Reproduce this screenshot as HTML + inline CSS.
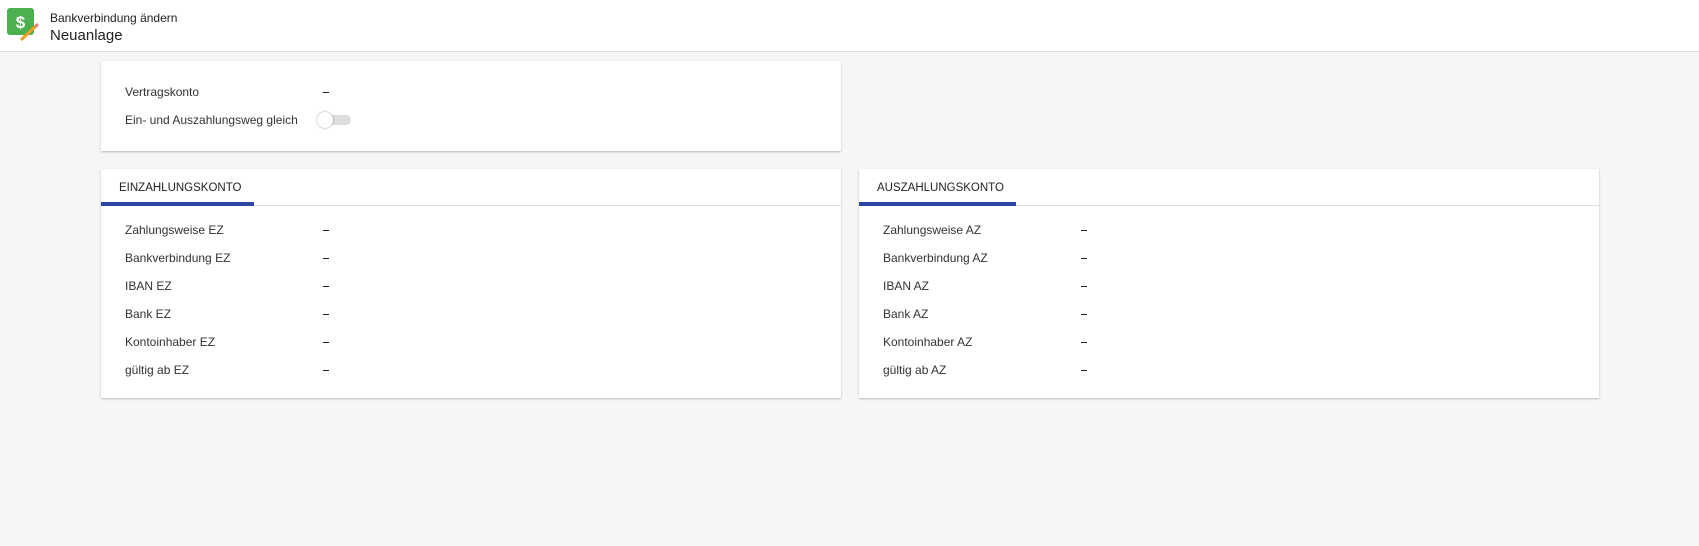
<!DOCTYPE html>
<html><head><meta charset="utf-8"><style>
*{margin:0;padding:0;box-sizing:border-box}
body{width:1699px;height:546px;background:#f6f6f6;font-family:"Liberation Sans",sans-serif;color:#333;position:relative;overflow:hidden}
.hdr{position:absolute;left:0;top:0;width:1699px;height:52px;background:#fff;border-bottom:1px solid #dcdcdc}
.t1{position:absolute;left:50px;top:11px;font-size:12px;color:#222}
.t2{position:absolute;left:50px;top:27px;font-size:15px;color:#222}
.card{position:absolute;background:#fff;box-shadow:0 1px 2px rgba(0,0,0,.25)}
.lbl{position:absolute;font-size:12px;color:#333}
.dash{position:absolute;width:6px;height:1px;background:#222}
.tab{position:absolute;top:13px;font-size:11.5px;color:#222}
.ul{position:absolute;top:33px;height:4px;background:#2d48a0}
.line{position:absolute;left:0;right:0;top:36px;height:1px;background:#e0e0e0}
</style></head><body>
<div class="hdr">
<svg style="position:absolute;left:6px;top:7px" width="34" height="34" viewBox="0 0 34 34">
<rect x="1" y="1" width="27" height="27" rx="3" fill="#4caf50"/>
<text x="14.5" y="21" text-anchor="middle" font-family="Liberation Sans" font-weight="bold" font-size="17" fill="#fff">$</text>
<line x1="15" y1="33" x2="31" y2="18" stroke="#f0a020" stroke-width="3"/>
<line x1="29" y1="20" x2="32" y2="17" stroke="#f08080" stroke-width="3"/>
</svg>
<div class="t1">Bankverbindung ändern</div>
<div class="t2">Neuanlage</div>
</div>

<div class="card" style="left:101px;top:61px;width:740px;height:90px">
<div class="lbl" style="left:24px;top:24px">Vertragskonto</div>
<div class="dash" style="left:222px;top:31px"></div>
<div class="lbl" style="left:24px;top:52px">Ein- und Auszahlungsweg gleich</div>
<div style="position:absolute;left:218px;top:54px;width:32px;height:10px;border-radius:5px;background:#ddd"></div>
<div style="position:absolute;left:216px;top:51px;width:16px;height:16px;border-radius:50%;background:#fff;box-shadow:0 0 2px rgba(0,0,0,.4)"></div>
</div>

<div class="card" style="left:101px;top:169px;width:740px;height:229px">
<div class="tab" style="left:18px">EINZAHLUNGSKONTO</div>
<div class="line"></div><div class="ul" style="left:0;width:153px"></div>
<div class="lbl" style="left:24px;top:54px">Zahlungsweise EZ</div><div class="dash" style="left:222px;top:61px"></div>
<div class="lbl" style="left:24px;top:82px">Bankverbindung EZ</div><div class="dash" style="left:222px;top:89px"></div>
<div class="lbl" style="left:24px;top:110px">IBAN EZ</div><div class="dash" style="left:222px;top:117px"></div>
<div class="lbl" style="left:24px;top:138px">Bank EZ</div><div class="dash" style="left:222px;top:145px"></div>
<div class="lbl" style="left:24px;top:166px">Kontoinhaber EZ</div><div class="dash" style="left:222px;top:173px"></div>
<div class="lbl" style="left:24px;top:194px">gültig ab EZ</div><div class="dash" style="left:222px;top:201px"></div>
</div>

<div class="card" style="left:859px;top:169px;width:740px;height:229px">
<div class="tab" style="left:18px">AUSZAHLUNGSKONTO</div>
<div class="line"></div><div class="ul" style="left:0;width:157px"></div>
<div class="lbl" style="left:24px;top:54px">Zahlungsweise AZ</div><div class="dash" style="left:222px;top:61px"></div>
<div class="lbl" style="left:24px;top:82px">Bankverbindung AZ</div><div class="dash" style="left:222px;top:89px"></div>
<div class="lbl" style="left:24px;top:110px">IBAN AZ</div><div class="dash" style="left:222px;top:117px"></div>
<div class="lbl" style="left:24px;top:138px">Bank AZ</div><div class="dash" style="left:222px;top:145px"></div>
<div class="lbl" style="left:24px;top:166px">Kontoinhaber AZ</div><div class="dash" style="left:222px;top:173px"></div>
<div class="lbl" style="left:24px;top:194px">gültig ab AZ</div><div class="dash" style="left:222px;top:201px"></div>
</div>
</body></html>
